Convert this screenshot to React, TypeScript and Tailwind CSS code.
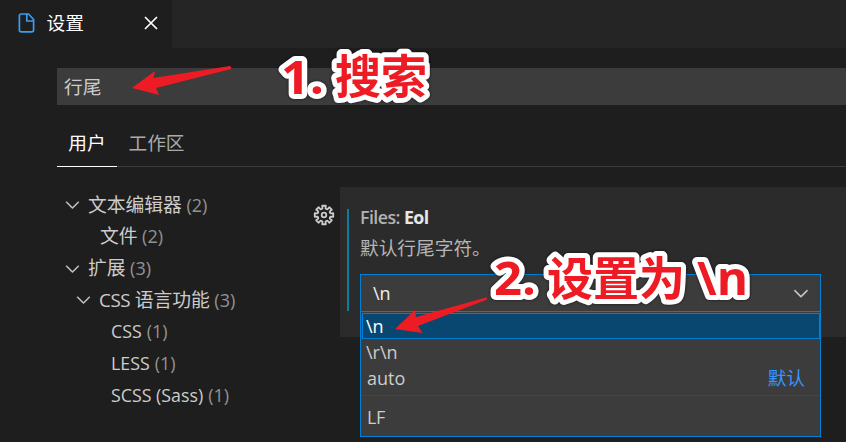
import type { ReactNode } from 'react';
import { VscChevronDown } from 'react-icons/vsc';

type TreeItem = { label: ReactNode; count: number; pad: string; open?: boolean };

const tree: TreeItem[] = [
  { label: '文本编辑器', count: 2, pad: 'pl-[5px]', open: true },
  { label: '文件', count: 2, pad: 'pl-[43px]' },
  { label: '扩展', count: 3, pad: 'pl-[5px]', open: true },
  { label: <><span className="tracking-[-0.4px]">CSS </span>语言功能</>, count: 3, pad: 'pl-[16px]', open: true },
  { label: 'CSS', count: 1, pad: 'pl-[54px]' },
  { label: 'LESS', count: 1, pad: 'pl-[54px]' },
  { label: 'SCSS (Sass)', count: 1, pad: 'pl-[54px]' },
];

const gearPoints = Array.from({ length: 8 }, (_, i) =>
  [[-23, 6.3], [-13, 6.8], [-11, 9.4], [11, 9.4], [13, 6.8]].map(([offset, r]) => {
    const a = ((i * 45 + offset) * Math.PI) / 180;
    return `${(11 + r * Math.sin(a)).toFixed(2)},${(11 - r * Math.cos(a)).toFixed(2)}`;
  }).join(' '),
).join(' ');

function GearIcon() {
  return (
    <svg className="size-[22px]" viewBox="0 0 22 22" fill="none" stroke="#cccccc" strokeWidth="1.8" strokeLinejoin="round">
      <polygon points={gearPoints} />
      <circle cx="11" cy="11" r="2.3" />
    </svg>
  );
}

function FileIcon() {
  return (
    <svg className="h-[20px] w-[18px] shrink-0" viewBox="0 0 18 20" fill="none" stroke="#3b9df0" strokeWidth="1.7">
      <path d="M3.2 1H10.5L15.6 6.5V17A1.8 1.8 0 0 1 13.8 18.8H3.2A1.8 1.8 0 0 1 1.4 17V2.8A1.8 1.8 0 0 1 3.2 1Z" />
      <path d="M8.8 1V8H15.6" />
    </svg>
  );
}

function Annotation({ x, y, width, children }: { x: number; y: number; width: number; children: string }) {
  return (
    <text
      x={x}
      y={y}
      textLength={width}
      lengthAdjust="spacingAndGlyphs"
      fill="#ed1c24"
      stroke="#fff"
      strokeWidth="10"
      strokeLinejoin="round"
      paintOrder="stroke"
      className="text-[46px] font-bold [filter:drop-shadow(0_0_1.5px_#0009)]"
    >
      {children}
    </text>
  );
}

export default function App() {
  return (
    <div className="relative h-[442px] w-[846px] overflow-hidden bg-[#1e1e1e] font-['Open_Sans','Noto_Sans_CJK_SC',sans-serif] text-[18.7px] leading-[26px] text-[#cccccc]">
      <header className="flex h-[48px] bg-[#252526]">
        <div className="flex w-[172px] items-center bg-[#1e1e1e] pb-[3px] pl-[18px] text-white">
          <FileIcon />
          <span className="ml-[10.5px]">设置</span>
          <svg className="ml-[60.5px] size-[14px]" viewBox="0 0 14 14" stroke="currentColor" strokeWidth="1.7">
            <path d="M1 1L13 13M13 1L1 13" />
          </svg>
        </div>
      </header>

      <main className="pl-[57px] pt-[20px]">
        <div className="flex h-[37px] items-center bg-[#3c3c3c] pl-[7px]">行尾</div>

        <nav className="mt-[15px] flex h-[47px] border-b border-[#3c3c3c]">
          <div className="flex h-[47px] w-[60px] items-center justify-center border-b border-white text-white">用户</div>
          <div className="ml-[11.5px] flex items-center text-[#ababab]">工作区</div>
        </nav>

        <div className="flex">
          <aside className="w-[256px] pt-[22px]">
            {tree.map((item, i) => (
              <div key={i} className={`flex h-[31.65px] items-center ${item.pad}`}>
                {item.open && <VscChevronDown className="mr-[5px] size-[21px] stroke-[0.3]" />}
                <span className="whitespace-nowrap text-[18px]">
                  <span className={i > 3 ? 'text-[17.8px]' : 'text-[18.8px]'}>{item.label}</span>
                  <span className={`text-[#929292] ${i > 3 ? 'ml-[5px]' : 'ml-[4.5px]'}`}>({item.count})</span>
                </span>
              </div>
            ))}
          </aside>
          <div className="w-[27px] pt-[36.5px]">
            <GearIcon />
          </div>

          <section className="mt-[20px] flex h-[150px] flex-1 bg-[#2b2b2b] pl-[7px]">
            <div className="mt-[22px] h-[102px] w-[2px] bg-[#0c7d9d]" />
            <div className="ml-[11px] w-[461px] pt-[17px]">
              <div className="text-[17.8px] font-bold tracking-[-0.55px] text-[#b3b3b3]">
                <span className="font-semibold">Files: </span>
                <span className="text-[#e7e7e7]">Eol</span>
              </div>
              <div className="mt-[5px] text-[#b5b5b5]">默认行尾字符。</div>
              <div className="relative mt-[13px] flex h-[38px] items-center justify-between border border-[#007fd4] bg-[#3c3c3c] pl-[12px] pr-[8px] text-[18px] text-[#f0f0f0]">
                <span>{'\\n'}</span>
                <VscChevronDown className="size-[22px] stroke-[0.3] text-[#cccccc]" />
                <div className="absolute -left-px top-[36px] h-[126px] w-[461px] border border-[#007fd4] bg-[#3c3c3c] pt-px text-[#cccccc]">
                  <div className="ml-px flex h-[26px] items-center border border-[#007fd4] bg-[#094771] pl-[3px] text-white">{'\\n'}</div>
                  <div className="flex h-[26px] items-center pl-[5px]">{'\\r\\n'}</div>
                  <div className="flex h-[26px] items-center justify-between pl-[6px] pr-[15px]">
                    <span>auto</span>
                    <span className="text-[18.7px] text-[#3794ff]">默认</span>
                  </div>
                  <div className="mt-[4px] flex h-[40px] items-center border-t border-[#454545] pl-[6px] pt-[2px] tracking-[-0.5px]">LF</div>
                </div>
              </div>
            </div>
          </section>
        </div>
      </main>

      <svg className="pointer-events-none absolute inset-0 h-[442px] w-[846px]" viewBox="0 0 846 442">
        <path d="M132 88L155 71L153.5 78L230 66Q232 67 231 69L156 88L159 95Z" fill="#ed1c24" />
        <path d="M395 329L415 310L416 317L486 297.5Q488 298 486 300L418 326L422.5 333Z" fill="#ed1c24" />
        <Annotation x={281} y={94} width={43}>1.</Annotation>
        <Annotation x={335} y={93} width={92}>搜索</Annotation>
        <Annotation x={494} y={295} width={42}>2.</Annotation>
        <Annotation x={547} y={295} width={138}>设置为</Annotation>
        <Annotation x={697} y={295} width={51}>{'\\n'}</Annotation>
      </svg>
    </div>
  );
}
